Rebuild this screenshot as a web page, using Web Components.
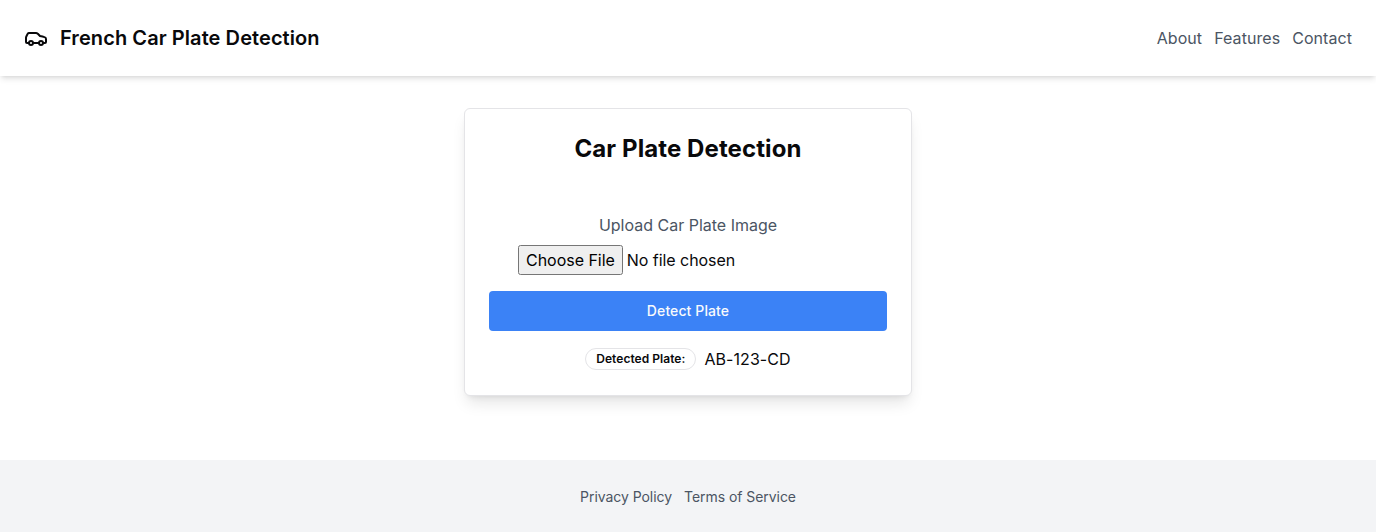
<!DOCTYPE html>
<html lang="en">
<head>
<meta charset="utf-8">
<title>French Car Plate Detection</title>
<style>
body{margin:0;font:16px/24px Inter,sans-serif;color:#09090b;background:#fff}
</style>
</head>
<body>
<plate-app></plate-app>
<script>
function define(name, html) {
  const template = document.createElement('template');
  template.innerHTML = '<style>*{box-sizing:border-box}:host{box-sizing:border-box}</style>' + html;
  customElements.define(name, class extends HTMLElement {
    constructor() {
      super();
      this.attachShadow({ mode: 'open' }).append(template.content.cloneNode(true));
    }
  });
}

define('nav-link', `
<style>:host{display:block}a{color:var(--link,#4b5563);text-decoration:none;display:block}</style>
<a href="#"><slot></slot></a>`);

define('car-icon', `
<style>:host{display:block;width:24px;height:24px}svg{display:block}</style>
<svg width="24" height="24" viewBox="0 0 24 24" fill="none" stroke="currentColor" stroke-width="2" stroke-linecap="round" stroke-linejoin="round">
<path d="M19 17h2c.6 0 1-.4 1-1v-3c0-.9-.7-1.7-1.5-1.9C18.7 10.6 16 10 16 10s-1.300-1.400-2.200-2.300c-.5-.4-1.100-.7-1.800-.7H5c-.6 0-1.100.4-1.400.9l-1.400 2.900A3.700 3.700 0 0 0 2 12v4c0 .6.4 1 1 1h2"/><circle cx="7" cy="17" r="2"/><path d="M9 17h6"/><circle cx="17" cy="17" r="2"/></svg>`);

define('app-header', `
<style>:host{display:flex;align-items:center;justify-content:space-between;height:76px;padding:24px;background:#fff;box-shadow:0 4px 6px -1px rgba(0,0,0,.1),0 2px 4px -2px rgba(0,0,0,.1)}
.brand{display:flex;align-items:center;gap:12px;font-size:20px;line-height:28px;font-weight:600;letter-spacing:.075px}
nav{display:flex;gap:12px;letter-spacing:.06px}</style>
<div class="brand"><car-icon></car-icon><span><slot></slot></span></div>
<nav><slot name="links"></slot></nav>`);

define('plate-badge', `
<style>:host{display:inline-flex;align-items:center;border:1px solid #e4e4e7;border-radius:999px;padding:2px 10px;font-size:12px;line-height:16px;font-weight:600;letter-spacing:.04px}</style><slot></slot>`);

define('action-button', `
<style>:host{display:block}button{width:100%;height:40px;border:0;border-radius:4px;background:#3b82f6;color:#f8fafc;font:500 14px/20px Inter,sans-serif;letter-spacing:.1px;display:block}</style>
<button><slot></slot></button>`);

define('file-field', `
<style>:host{display:flex;flex-direction:column;align-items:center;gap:8px}
label{color:#4b5563}input{display:block;font:inherit;color:inherit;width:340px;height:30px;padding:0;margin:0;letter-spacing:-.05px}
input::file-selector-button{font:inherit;letter-spacing:-.03px;height:30px}</style>
<label for="file"><slot></slot></label><input id="file" type="file">`);

define('plate-card', `
<style>:host{display:block;width:448px;height:288px;border:1px solid #e4e4e7;border-radius:6px;padding:24px;background:#fff;box-shadow:0 10px 15px -3px rgba(0,0,0,.1),0 4px 6px -4px rgba(0,0,0,.1)}
h2{margin:0;font-size:24px;line-height:32px;font-weight:700;text-align:center;letter-spacing:.1px}
.body{display:flex;flex-direction:column;gap:16px;padding-top:48px}
.result{display:flex;align-items:center;justify-content:center;gap:8px}
.plate{letter-spacing:.08px}</style>
<h2>Car Plate Detection</h2>
<div class="body"><file-field>Upload Car Plate Image</file-field>
<action-button>Detect Plate</action-button>
<div class="result"><plate-badge>Detected Plate:</plate-badge><span class="plate">AB-123-CD</span></div></div>`);

define('app-footer', `
<style>:host{display:flex;align-items:center;justify-content:center;gap:12px;height:72px;padding-top:2px;background:#f3f4f6;font-size:14px;line-height:20px;letter-spacing:-.05px}</style><slot></slot>`);

define('plate-app', `
<style>:host{display:flex;flex-direction:column;height:532px}
main{flex:1;display:flex;justify-content:center;align-items:flex-start;padding-top:32px}</style>
<app-header>French Car Plate Detection<nav-link slot="links">About</nav-link><nav-link slot="links">Features</nav-link><nav-link slot="links">Contact</nav-link></app-header>
<main><plate-card></plate-card></main>
<app-footer><nav-link>Privacy Policy</nav-link><nav-link>Terms of Service</nav-link></app-footer>`);
</script>
</body>
</html>
